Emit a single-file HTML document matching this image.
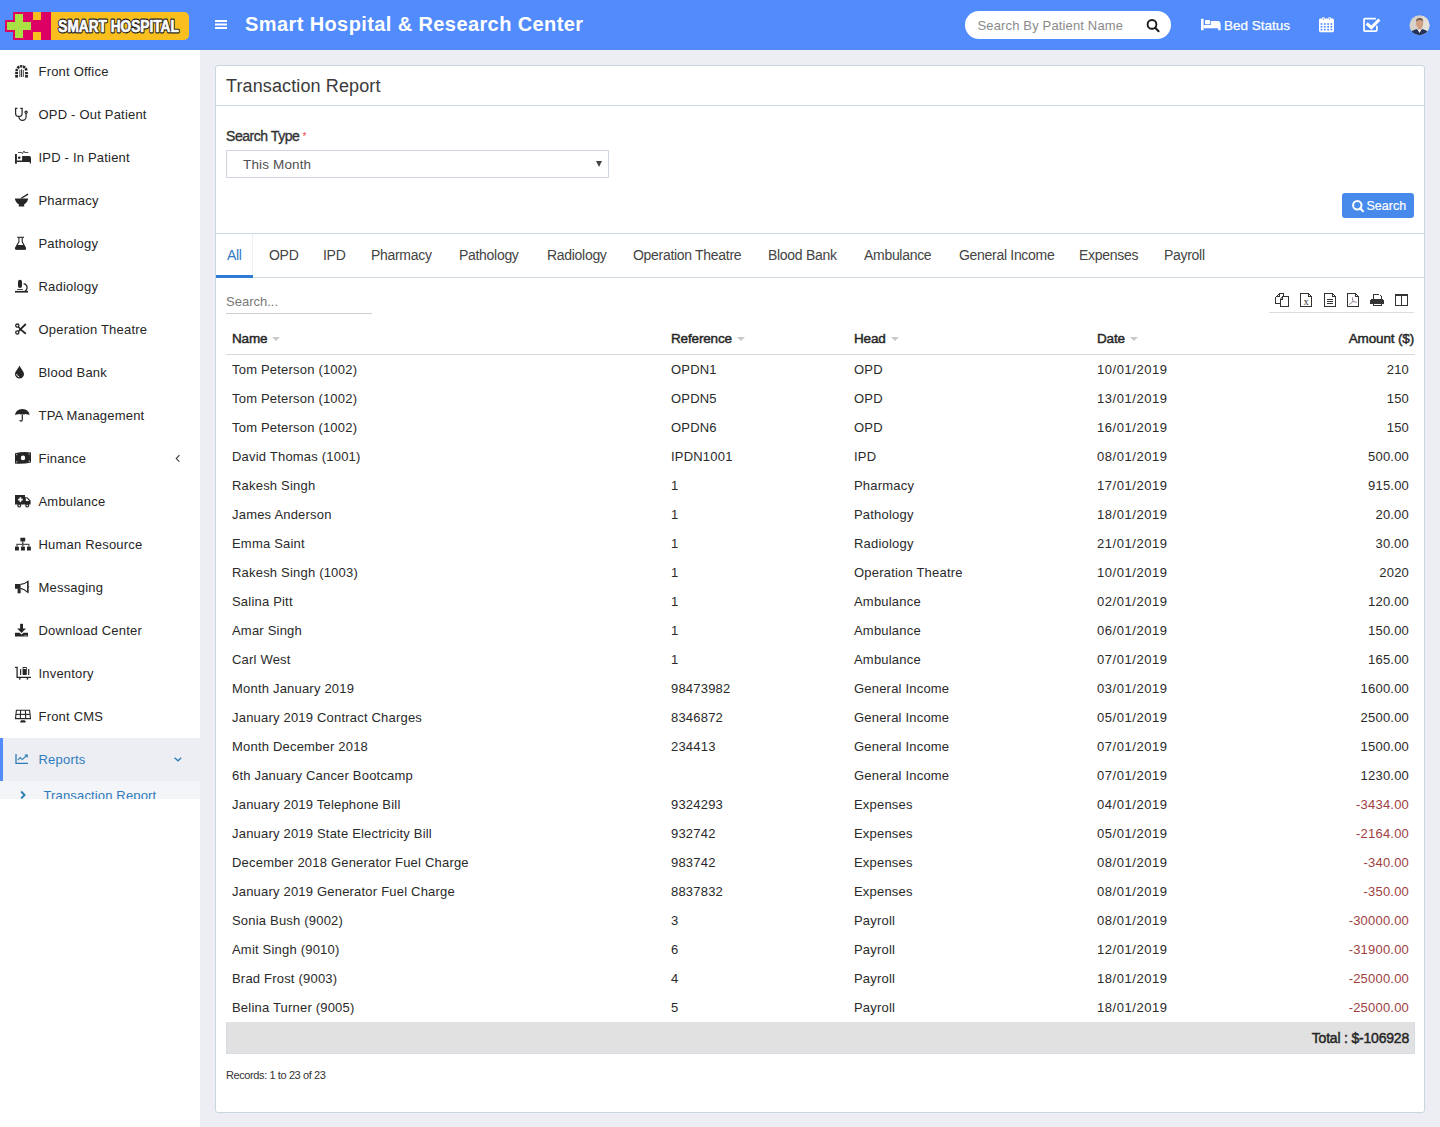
<!DOCTYPE html>
<html><head><meta charset="utf-8">
<style>
*{box-sizing:border-box;margin:0;padding:0}
html,body{width:1440px;height:1127px;overflow:hidden}
body{background:#eceef3;font-family:"Liberation Sans",sans-serif;color:#222;position:relative}
.a{position:absolute;white-space:nowrap}
.hdr{position:absolute;left:0;top:0;width:1440px;height:50px;background:#528cfc}
.side{position:absolute;left:0;top:50px;width:200px;height:1077px;background:#fff}
.mt{font-size:13px;color:#2b2b2b;line-height:16px;letter-spacing:0.2px}
.box{position:absolute;left:215px;top:65px;width:1210px;height:1048px;background:#fff;border:1px solid #c9d6df;border-radius:3px}
.tab{font-size:14px;color:#444;line-height:16px;top:247px;letter-spacing:-0.3px}
.th{font-size:13.5px;color:#262626;line-height:16px;top:331px;letter-spacing:-0.15px;-webkit-text-stroke:0.45px #262626}
.td{font-size:13px;color:#2a2a2a;line-height:16px;letter-spacing:0.2px}
.dg{letter-spacing:0.55px}
.neg{color:#a0413f}
.sort{display:inline-block;width:0;height:0;border-left:4px solid transparent;border-right:4px solid transparent;border-top:4px solid #c9c9c9;margin-left:5px;vertical-align:2px}
</style></head><body>

<div class="hdr">
<svg class="a" style="left:0;top:0" width="200" height="50" viewBox="0 0 200 50"><rect x="45" y="12" width="144" height="28" rx="5" fill="#f8bf1f"/><path d="M13 12 H51 V40 H13 V32 H5 V20 H13 Z" fill="#dc0065"/><rect x="15" y="14" width="8" height="24" fill="#a9e043"/><rect x="7" y="22" width="24" height="8" fill="#a9e043"/><rect x="33" y="12" width="8" height="8" fill="#f8bf1f"/><rect x="33" y="32" width="8" height="8" fill="#f8bf1f"/><text x="58.3" y="31.6" font-family="Liberation Sans" font-weight="bold" font-size="16" textLength="120.5" lengthAdjust="spacingAndGlyphs" fill="#1a1a1a" stroke="#1a1a1a" stroke-width="2.8" stroke-linejoin="round">SMART HOSPITAL</text><text x="58.3" y="31.6" font-family="Liberation Sans" font-weight="bold" font-size="16" textLength="120.5" lengthAdjust="spacingAndGlyphs" fill="#fff" stroke="#fff" stroke-width="0.7" stroke-linejoin="round">SMART HOSPITAL</text></svg>
<div class="a" style="left:245px;top:12px;font-size:20px;font-weight:bold;color:#fff;line-height:24px;letter-spacing:0.4px">Smart Hospital &amp; Research Center</div>
<div class="a" style="left:965px;top:11px;width:206px;height:28px;background:#fff;border-radius:14px"></div>
<div class="a" style="left:977.5px;top:18px;font-size:13px;color:#8a8a8a;line-height:16px;letter-spacing:0.15px">Search By Patient Name</div>
<div class="a" style="left:1224px;top:17.5px;font-size:13.5px;color:#fff;line-height:16px;-webkit-text-stroke:0.25px #fff">Bed Status</div>
<svg class="a" style="left:215px;top:19px" width="12" height="11" viewBox="0 0 12 11" fill="#fff"><rect x="0" y="1" width="12" height="2"/><rect x="0" y="4.5" width="12" height="2"/><rect x="0" y="8" width="12" height="2"/></svg><svg class="a" style="left:1144px;top:17px" width="18" height="18" viewBox="0 0 18 18"><circle cx="8" cy="7.4" r="4.4" fill="none" stroke="#1b1b1b" stroke-width="1.9"/><path d="M11.2 10.8 L14.6 14.3" stroke="#1b1b1b" stroke-width="2" stroke-linecap="round"/></svg><svg class="a" style="left:1200px;top:18px" width="22" height="13" viewBox="0 0 22 13" fill="#fff"><rect x="1" y="0.8" width="2.6" height="11.4"/><rect x="5" y="2" width="5" height="4.2" rx="1"/><path d="M3.5 9.5 V7 H10.8 V3 H17.5 Q20.6 3 20.6 6.3 V12.2 H18.2 V10.3 H3.5 Z"/></svg><svg class="a" style="left:1318px;top:16px" width="18" height="18" viewBox="0 0 18 18"><rect x="1" y="2.6" width="15" height="13.6" rx="1.4" fill="#fff"/><rect x="4.2" y="1" width="2.4" height="3.4" rx="1" fill="#fff"/><rect x="10.4" y="1" width="2.4" height="3.4" rx="1" fill="#fff"/><rect x="5" y="1.6" width="0.8" height="2.4" fill="#7aa6fa"/><rect x="11.2" y="1.6" width="0.8" height="2.4" fill="#7aa6fa"/><g fill="#528cfc"><rect x="2.6" y="7.2" width="1.8" height="1.6"/><rect x="5.9" y="7.2" width="1.8" height="1.6"/><rect x="9.2" y="7.2" width="1.8" height="1.6"/><rect x="12.5" y="7.2" width="1.8" height="1.6"/><rect x="2.6" y="10" width="1.8" height="1.6"/><rect x="5.9" y="10" width="1.8" height="1.6"/><rect x="9.2" y="10" width="1.8" height="1.6"/><rect x="12.5" y="10" width="1.8" height="1.6"/><rect x="2.6" y="12.8" width="1.8" height="1.6"/><rect x="5.9" y="12.8" width="1.8" height="1.6"/><rect x="9.2" y="12.8" width="1.8" height="1.6"/><rect x="12.5" y="12.8" width="1.8" height="1.6"/></g></svg><svg class="a" style="left:1362px;top:16px" width="20" height="18" viewBox="0 0 20 18" fill="none" stroke="#fff"><path d="M14.9 9.8 V13.9 Q14.9 15.1 13.7 15.1 H3.2 Q2 15.1 2 13.9 V3.8 Q2 2.6 3.2 2.6 H13.9" stroke-width="1.7"/><path d="M4.7 7.5 L9.4 11.7 L17.4 3.5" stroke-width="3.1"/></svg><svg class="a" style="left:1409px;top:15px" width="21" height="21" viewBox="0 0 21 21"><defs><clipPath id="av"><circle cx="10.5" cy="10.3" r="10"/></clipPath></defs><g clip-path="url(#av)"><rect width="21" height="21" fill="#d7d2cb"/><rect x="14" y="0" width="7" height="21" fill="#e4e0da"/><path d="M0 21 L2 16.5 Q5 14.6 8 14 L10.5 17 L13 14 Q16 14.6 19 16.5 L21 21 Z" fill="#24335a"/><path d="M8.3 14 L10.5 18 L12.7 14 Z" fill="#f4f4f4"/><ellipse cx="10.6" cy="8.6" rx="3.6" ry="4.6" fill="#d1a184"/><path d="M6.9 7.2 Q7 3.2 10.6 3.1 Q14.3 3.2 14.3 7 Q13.8 5.2 10.6 5.1 Q7.6 5.2 6.9 7.2 Z" fill="#6e5b4d"/><rect x="9" y="12.2" width="3.2" height="2.2" fill="#c9967a"/></g></svg>
</div>
<div class="side">
<div class="a mt" style="left:38.5px;top:14px;color:#262626">Front Office</div>
<svg class="a" style="left:12px;top:12px" width="22" height="18" viewBox="0 0 22 18" fill="#262626" stroke="none"><path d="M4.6 9.2 A4.9 4.9 0 0 1 14.4 9.2" stroke="#262626" stroke-width="2.6" fill="none" stroke-dasharray="2.3 0.7"/><rect x="3.2" y="10" width="2.8" height="2.2"/><rect x="3.2" y="13" width="2.8" height="2.6"/><rect x="13.1" y="10" width="2.8" height="2.2"/><rect x="13.1" y="13" width="2.8" height="2.6"/><rect x="7.4" y="7.8" width="0.9" height="7.2"/><rect x="9.1" y="7.2" width="0.9" height="7.8"/><rect x="10.8" y="7.8" width="0.9" height="7.2"/></svg>
<div class="a mt" style="left:38.5px;top:57px;color:#262626">OPD - Out Patient</div>
<svg class="a" style="left:12px;top:55px" width="22" height="18" viewBox="0 0 22 18" fill="#262626" stroke="none"><g fill="none" stroke="#262626" stroke-width="1.2"><path d="M3.6 3.2 V8.2 A3.25 3.25 0 0 0 10.1 8.2 V3.2"/><path d="M3 3.3 H5.4 M8.3 3.3 H10.7"/><path d="M6.9 11.4 V11.8 A3.6 3.6 0 0 0 14.1 11.8 V8.3"/><circle cx="14.1" cy="7.2" r="1.1"/></g></svg>
<div class="a mt" style="left:38.5px;top:100px;color:#262626">IPD - In Patient</div>
<svg class="a" style="left:12px;top:98px" width="22" height="18" viewBox="0 0 22 18" fill="#262626" stroke="none"><path d="M6 4.5 H9.8 L10.4 5.8 L12 3 L12.6 4.5 H16.3" fill="none" stroke="#262626" stroke-width="0.8"/><rect x="3" y="6" width="1.9" height="9.7"/><circle cx="7.2" cy="9.8" r="1.3"/><path d="M10.1 8 H17 Q19 8 19 10 V15.6 H17.8 V14 H4.9 V12.5 H10.1 Z"/></svg>
<div class="a mt" style="left:38.5px;top:143px;color:#262626">Pharmacy</div>
<svg class="a" style="left:12px;top:141px" width="22" height="18" viewBox="0 0 22 18" fill="#262626" stroke="none"><path d="M9.6 7 L15.6 3.3" stroke="#262626" stroke-width="1.4" fill="none" stroke-linecap="round"/><path d="M3 7.6 H16 V8.4 L15 10.8 Q14 12.6 12.2 13.3 V15.6 H6.8 V13.3 Q5 12.6 4 10.8 L3 8.4 Z"/></svg>
<div class="a mt" style="left:38.5px;top:186px;color:#262626">Pathology</div>
<svg class="a" style="left:12px;top:184px" width="22" height="18" viewBox="0 0 22 18" fill="#262626" stroke="none"><g fill="none" stroke="#262626" stroke-width="1.1"><path d="M5.2 3.3 H12"/><path d="M6.9 3.4 V7.8 L3.5 14 Q3.2 15.1 4.4 15.1 H12.7 Q13.8 15.1 13.5 14 L10.2 7.8 V3.4"/></g><path d="M5 11 H12 L13.7 14.2 Q14 15.6 12.6 15.6 H4.4 Q3 15.6 3.4 14.2 Z"/></svg>
<div class="a mt" style="left:38.5px;top:229px;color:#262626">Radiology</div>
<svg class="a" style="left:12px;top:227px" width="22" height="18" viewBox="0 0 22 18" fill="#262626" stroke="none"><rect x="6" y="2.7" width="4" height="8.2" rx="2"/><rect x="5.2" y="12" width="5.8" height="0.8"/><path d="M11.6 6.6 Q15.6 7.6 15 11.5 Q14.6 13.2 13 14" fill="none" stroke="#262626" stroke-width="1.3"/><rect x="3" y="13.9" width="13" height="1.7"/></svg>
<div class="a mt" style="left:38.5px;top:272px;color:#262626">Operation Theatre</div>
<svg class="a" style="left:12px;top:270px" width="22" height="18" viewBox="0 0 22 18" fill="#262626" stroke="none"><g fill="none" stroke="#262626" stroke-width="1.3"><circle cx="5.3" cy="5.6" r="1.6"/><circle cx="5.3" cy="12.4" r="1.6"/></g><path d="M6.5 7 L8.6 9.2 L6.5 11.2" fill="none" stroke="#262626" stroke-width="1.5"/><path d="M7.6 10.2 L13.8 4 M7.6 8.6 L13.8 13.8" stroke="#262626" stroke-width="1.8" fill="none"/></svg>
<div class="a mt" style="left:38.5px;top:315px;color:#262626">Blood Bank</div>
<svg class="a" style="left:12px;top:313px" width="22" height="18" viewBox="0 0 22 18" fill="#262626" stroke="none"><path d="M7.5 2.6 C8.6 5.6 12 8.5 12 11 A4.5 4.5 0 0 1 3 11 C3 8.5 6.4 5.6 7.5 2.6 Z"/><path d="M4.6 11 Q4.7 13.4 7.2 13.8" fill="none" stroke="#fff" stroke-width="0.9"/></svg>
<div class="a mt" style="left:38.5px;top:358px;color:#262626">TPA Management</div>
<svg class="a" style="left:12px;top:356px" width="22" height="18" viewBox="0 0 22 18" fill="#262626" stroke="none"><path d="M3 9.2 Q3.6 3.2 10.3 3 Q17 3.2 17.6 9.2 Q16.4 8 15.2 8.6 Q13.6 7.6 12 8.6 Q10.3 7.8 8.6 8.6 Q7 7.6 5.4 8.6 Q4.2 8 3 9.2 Z"/><path d="M10.3 8.5 V13.8 Q10.3 15.2 9.1 15.2 Q7.9 15.2 7.9 14" fill="none" stroke="#262626" stroke-width="1.2"/></svg>
<div class="a mt" style="left:38.5px;top:401px;color:#262626">Finance</div>
<svg class="a" style="left:12px;top:399px" width="22" height="18" viewBox="0 0 22 18" fill="#262626" stroke="none"><path d="M3 4.2 Q11 2.2 19 3.4 V13.4 Q11 15.4 3 14.6 Z"/><ellipse cx="11" cy="8.9" rx="2.2" ry="2.4" fill="#fff"/><circle cx="4.8" cy="5.6" r="0.6" fill="#fff"/><circle cx="17.2" cy="5" r="0.6" fill="#fff"/><circle cx="4.8" cy="12.8" r="0.6" fill="#fff"/><circle cx="17.2" cy="12.2" r="0.6" fill="#fff"/></svg>
<div class="a mt" style="left:38.5px;top:444px;color:#262626">Ambulance</div>
<svg class="a" style="left:12px;top:442px" width="22" height="18" viewBox="0 0 22 18" fill="#262626" stroke="none"><path d="M3 3 H13 V5.3 H15.2 L18.6 8.6 V12.6 H3 Z"/><path d="M13.8 6.2 H14.8 L17.2 9 H13.8 Z" fill="#fff"/><path d="M7.6 5.3 H9.2 V6.8 H10.7 V8.4 H9.2 V9.9 H7.6 V8.4 H6.1 V6.8 H7.6 Z" fill="#fff"/><circle cx="7.2" cy="13.6" r="2"/><circle cx="15.2" cy="13.6" r="2"/><circle cx="7.2" cy="13.6" r="0.8" fill="#fff"/><circle cx="15.2" cy="13.6" r="0.8" fill="#fff"/></svg>
<div class="a mt" style="left:38.5px;top:487px;color:#262626">Human Resource</div>
<svg class="a" style="left:12px;top:485px" width="22" height="18" viewBox="0 0 22 18" fill="#262626" stroke="none"><rect x="8.4" y="2.7" width="4.8" height="3.9" rx="0.5"/><rect x="10.2" y="6.5" width="1.2" height="4.6"/><path d="M4.9 11.2 V9.4 H16.9 V11.2" fill="none" stroke="#555" stroke-width="1.2"/><rect x="3" y="11.6" width="3.9" height="4" rx="0.5"/><rect x="9" y="11.6" width="3.9" height="4" rx="0.5"/><rect x="15" y="11.6" width="3.9" height="4" rx="0.5"/></svg>
<div class="a mt" style="left:38.5px;top:530px;color:#262626">Messaging</div>
<svg class="a" style="left:12px;top:528px" width="22" height="18" viewBox="0 0 22 18" fill="#262626" stroke="none"><rect x="3" y="6" width="5.6" height="4.8"/><rect x="5.6" y="10.5" width="3" height="4.8"/><path d="M8.6 6.4 Q12.4 6.2 15.8 3.3 V14.3 Q12.4 11.2 8.6 10.4" fill="none" stroke="#262626" stroke-width="1.1"/><rect x="15.2" y="3.1" width="1.3" height="11.4"/><path d="M16.4 7.8 L17.4 8.7 L16.4 9.6 Z"/></svg>
<div class="a mt" style="left:38.5px;top:573px;color:#262626">Download Center</div>
<svg class="a" style="left:12px;top:571px" width="22" height="18" viewBox="0 0 22 18" fill="#262626" stroke="none"><rect x="8.1" y="2.8" width="2.9" height="5.2"/><path d="M5.1 7.6 H14 L9.55 12 Z"/><path d="M3 11.8 H7.6 L9.55 13.4 L11.5 11.8 H16 V15.6 H3 Z"/><circle cx="12.2" cy="14.4" r="0.45" fill="#fff"/><circle cx="13.4" cy="14.4" r="0.45" fill="#fff"/><circle cx="14.5" cy="14.4" r="0.45" fill="#fff"/></svg>
<div class="a mt" style="left:38.5px;top:616px;color:#262626">Inventory</div>
<svg class="a" style="left:12px;top:614px" width="22" height="18" viewBox="0 0 22 18" fill="#262626" stroke="none"><path d="M3 3.3 H5.1 V13.4 H19" fill="none" stroke="#262626" stroke-width="1.3"/><circle cx="7.8" cy="14.8" r="0.9"/><circle cx="15.4" cy="14.8" r="0.9"/><rect x="10.6" y="3" width="4.2" height="7.9" rx="0.6"/><rect x="11.4" y="4" width="2.6" height="1" fill="#fff"/><rect x="8" y="5" width="1.2" height="6" rx="0.5"/><rect x="16.1" y="5" width="1.2" height="6" rx="0.5"/></svg>
<div class="a mt" style="left:38.5px;top:659px;color:#262626">Front CMS</div>
<svg class="a" style="left:12px;top:657px" width="22" height="18" viewBox="0 0 22 18" fill="#262626" stroke="none"><g fill="none" stroke="#262626" stroke-width="1.1"><path d="M4.4 3.3 H17.6 L18.5 11.6 H3.5 Z"/><path d="M3.9 7.4 H18"/><path d="M8.6 3.3 L8.3 11.6 M13.4 3.3 L13.7 11.6"/></g><path d="M8.2 15.4 H13.6 V14.4 L12.6 13.2 H9.2 L8.2 14.4 Z"/></svg>
<div class="a" style="left:0;top:688px;width:200px;height:43px;background:#eceef3;border-left:3px solid #528cfc"></div>
<div class="a" style="left:0;top:731px;width:200px;height:18px;background:#f4f5f8;overflow:hidden"><div class="a" style="left:43.5px;top:7px;font-size:13px;color:#2f7bbd;line-height:16px;letter-spacing:0.15px">Transaction Report</div><svg class="a" style="left:18px;top:8px" width="10" height="10" viewBox="0 0 10 10"><path d="M3.2 2.5 L6.6 6 L3.2 9.5" fill="none" stroke="#2c7cb6" stroke-width="1.8"/></svg></div>
<div class="a mt" style="left:38.5px;top:702px;color:#2f7bbd">Reports</div>
<svg class="a" style="left:12px;top:700px" width="22" height="18" viewBox="0 0 22 18" fill="#2c7cb6" stroke="none"><path d="M4 4 V13.4 H16" fill="none" stroke="#2c7cb6" stroke-width="1.3"/><path d="M5.8 10.2 L8.2 7.6 L10.3 9.6 L14 6" fill="none" stroke="#2c7cb6" stroke-width="1.1"/><path d="M12.3 4.6 H15.8 V8.1 Z"/></svg>
<svg class="a" style="left:170px;top:403px" width="16" height="14" viewBox="0 0 16 14"><path d="M9.4 2.2 L6.3 5.6 L9.4 8.7" fill="none" stroke="#444" stroke-width="1.2"/></svg>
<svg class="a" style="left:170px;top:703px" width="16" height="14" viewBox="0 0 16 14"><path d="M4.6 4.7 L8 7.8 L11.2 4.7" fill="none" stroke="#2c7cb6" stroke-width="1.3"/></svg>
</div>
<div class="box">
<div class="a" style="left:10px;top:9px;font-size:18px;color:#3a3a3a;line-height:22px;letter-spacing:0.12px">Transaction Report</div>
<div class="a" style="left:0;top:39px;width:1208px;height:1px;background:#d0dae2"></div>
</div>
<div class="a" style="left:226px;top:127.5px;font-size:14px;color:#333;line-height:16px;letter-spacing:-0.45px;-webkit-text-stroke:0.35px #333">Search Type</div><div class="a" style="left:302.5px;top:131px;font-size:10px;line-height:12px;color:#e8484a">*</div>
<div class="a" style="left:226px;top:150px;width:383px;height:28px;border:1px solid #cfd5df;background:#fff"></div>
<div class="a" style="left:243px;top:157px;font-size:13.5px;color:#505050;line-height:16px;letter-spacing:0.15px">This Month</div>
<div class="a" style="left:596px;top:161px;width:0;height:0;border-left:3.5px solid transparent;border-right:3.5px solid transparent;border-top:6px solid #444"></div>
<div class="a" style="left:1342px;top:193px;width:72px;height:25px;background:#478aec;border-radius:3px"></div>
<div class="a" style="left:1366.5px;top:198px;font-size:12.5px;color:#fff;line-height:16px;-webkit-text-stroke:0.2px #fff">Search</div>
<svg class="a" style="left:1350px;top:198px" width="16" height="16" viewBox="0 0 16 16"><circle cx="7.3" cy="7.2" r="4.2" fill="none" stroke="#fff" stroke-width="2"/><path d="M10.2 10.2 L13 13.2" stroke="#fff" stroke-width="2.2" stroke-linecap="round"/></svg>
<div class="a" style="left:216px;top:233px;width:1208px;height:1px;background:#d0dae2"></div>
<div class="a" style="left:216px;top:277px;width:1208px;height:1px;background:#d0dae2"></div>
<div class="a" style="left:252px;top:234px;width:1px;height:41px;background:#eef0f3"></div>
<div class="a" style="left:216px;top:275px;width:37px;height:3px;background:#2f7ad6"></div>
<div class="a tab" style="left:227px;color:#3379c4">All</div>
<div class="a tab" style="left:269px;color:#444">OPD</div>
<div class="a tab" style="left:323px;color:#444">IPD</div>
<div class="a tab" style="left:371px;color:#444">Pharmacy</div>
<div class="a tab" style="left:459px;color:#444">Pathology</div>
<div class="a tab" style="left:547px;color:#444">Radiology</div>
<div class="a tab" style="left:633px;color:#444">Operation Theatre</div>
<div class="a tab" style="left:768px;color:#444">Blood Bank</div>
<div class="a tab" style="left:864px;color:#444">Ambulance</div>
<div class="a tab" style="left:959px;color:#444">General Income</div>
<div class="a tab" style="left:1079px;color:#444">Expenses</div>
<div class="a tab" style="left:1164px;color:#444">Payroll</div>
<div class="a" style="left:226px;top:293.5px;font-size:13px;color:#777;line-height:16px">Search...</div>
<div class="a" style="left:226px;top:313px;width:146px;height:1px;background:#d0d0d0"></div>
<svg class="a" style="left:1270px;top:288px" width="150" height="24" viewBox="0 0 150 24" fill="#333333"><rect x="9" y="5" width="5" height="1"/><rect x="13" y="5" width="1" height="4"/><rect x="5" y="9" width="1" height="7"/><rect x="5" y="15" width="5" height="1"/><rect x="6" y="8" width="3" height="1"/><rect x="9" y="6" width="1" height="3"/><path d="M9.5 5.5 L5.5 9.5" stroke="#333333" stroke-width="1" fill="none"/><rect x="12" y="8" width="7" height="1"/><rect x="18" y="8" width="1" height="11"/><rect x="10" y="18" width="9" height="1"/><rect x="10" y="11" width="1" height="8"/><rect x="11" y="11" width="2" height="1"/><rect x="12" y="9" width="1" height="2"/><path d="M12.5 8.5 L10.5 11" stroke="#333333" stroke-width="1" fill="none"/><rect x="30" y="5" width="1" height="14"/><rect x="30" y="18" width="12" height="1"/><rect x="41" y="8" width="1" height="11"/><rect x="30" y="5" width="8" height="1"/><path d="M38.5 5.5 L41.5 8.5" stroke="#333333" stroke-width="1" fill="none"/><rect x="38" y="5" width="1" height="4"/><rect x="38" y="8" width="4" height="1"/><text x="33.4" y="16.7" font-family="Liberation Serif" font-size="10.5" fill="#333333">x</text><rect x="54" y="5" width="1" height="14"/><rect x="54" y="18" width="12" height="1"/><rect x="65" y="8" width="1" height="11"/><rect x="54" y="5" width="8" height="1"/><path d="M62.5 5.5 L65.5 8.5" stroke="#333333" stroke-width="1" fill="none"/><rect x="62" y="5" width="1" height="4"/><rect x="62" y="8" width="4" height="1"/><rect x="57" y="11" width="6" height="1"/><rect x="57" y="13" width="6" height="1"/><rect x="57" y="15" width="6" height="1"/><rect x="77" y="5" width="1" height="14"/><rect x="77" y="18" width="12" height="1"/><rect x="88" y="8" width="1" height="11"/><rect x="77" y="5" width="8" height="1"/><path d="M85.5 5.5 L88.5 8.5" stroke="#333333" stroke-width="1" fill="none"/><rect x="85" y="5" width="1" height="4"/><rect x="85" y="8" width="4" height="1"/><path d="M82.9 13.5 L82.4 9.4 M82.9 13.5 L79.3 16.6 M82.9 13.5 L86.6 14.3" stroke="#8e6f95" stroke-width="0.9" fill="none"/><rect x="103" y="6" width="6" height="1"/><rect x="103" y="6" width="1" height="6"/><rect x="111" y="8" width="1" height="4"/><rect x="110" y="7" width="1" height="1"/><rect x="100" y="12" width="14" height="4"/><rect x="101" y="11" width="12" height="1"/><rect x="103" y="16" width="1" height="2"/><rect x="111" y="16" width="1" height="2"/><rect x="103" y="17" width="9" height="1"/><rect x="125" y="6" width="13" height="2"/><rect x="125" y="6" width="1" height="12"/><rect x="137" y="6" width="1" height="12"/><rect x="131" y="6" width="1" height="12"/><rect x="125" y="17" width="13" height="1"/></svg>
<div class="a" style="left:1269px;top:312px;width:145px;height:1px;background:#dddddd"></div>
<div class="a th" style="left:232px">Name<span class="sort"></span></div>
<div class="a th" style="left:671px">Reference<span class="sort"></span></div>
<div class="a th" style="left:854px">Head<span class="sort"></span></div>
<div class="a th" style="left:1097px">Date<span class="sort"></span></div>
<div class="a th" style="right:26px">Amount ($)</div>
<div class="a" style="left:226px;top:354px;width:1189px;height:1px;background:#d9d9d9"></div>
<div class="a td" style="left:232px;top:362px">Tom Peterson (1002)</div>
<div class="a td" style="left:671px;top:362px">OPDN1</div>
<div class="a td" style="left:854px;top:362px">OPD</div>
<div class="a td dg" style="left:1097px;top:362px">10/01/2019</div>
<div class="a td" style="right:31px;top:362px">210</div>
<div class="a td" style="left:232px;top:391px">Tom Peterson (1002)</div>
<div class="a td" style="left:671px;top:391px">OPDN5</div>
<div class="a td" style="left:854px;top:391px">OPD</div>
<div class="a td dg" style="left:1097px;top:391px">13/01/2019</div>
<div class="a td" style="right:31px;top:391px">150</div>
<div class="a td" style="left:232px;top:420px">Tom Peterson (1002)</div>
<div class="a td" style="left:671px;top:420px">OPDN6</div>
<div class="a td" style="left:854px;top:420px">OPD</div>
<div class="a td dg" style="left:1097px;top:420px">16/01/2019</div>
<div class="a td" style="right:31px;top:420px">150</div>
<div class="a td" style="left:232px;top:449px">David Thomas (1001)</div>
<div class="a td" style="left:671px;top:449px">IPDN1001</div>
<div class="a td" style="left:854px;top:449px">IPD</div>
<div class="a td dg" style="left:1097px;top:449px">08/01/2019</div>
<div class="a td" style="right:31px;top:449px">500.00</div>
<div class="a td" style="left:232px;top:478px">Rakesh Singh</div>
<div class="a td" style="left:671px;top:478px">1</div>
<div class="a td" style="left:854px;top:478px">Pharmacy</div>
<div class="a td dg" style="left:1097px;top:478px">17/01/2019</div>
<div class="a td" style="right:31px;top:478px">915.00</div>
<div class="a td" style="left:232px;top:507px">James Anderson</div>
<div class="a td" style="left:671px;top:507px">1</div>
<div class="a td" style="left:854px;top:507px">Pathology</div>
<div class="a td dg" style="left:1097px;top:507px">18/01/2019</div>
<div class="a td" style="right:31px;top:507px">20.00</div>
<div class="a td" style="left:232px;top:536px">Emma Saint</div>
<div class="a td" style="left:671px;top:536px">1</div>
<div class="a td" style="left:854px;top:536px">Radiology</div>
<div class="a td dg" style="left:1097px;top:536px">21/01/2019</div>
<div class="a td" style="right:31px;top:536px">30.00</div>
<div class="a td" style="left:232px;top:565px">Rakesh Singh (1003)</div>
<div class="a td" style="left:671px;top:565px">1</div>
<div class="a td" style="left:854px;top:565px">Operation Theatre</div>
<div class="a td dg" style="left:1097px;top:565px">10/01/2019</div>
<div class="a td" style="right:31px;top:565px">2020</div>
<div class="a td" style="left:232px;top:594px">Salina Pitt</div>
<div class="a td" style="left:671px;top:594px">1</div>
<div class="a td" style="left:854px;top:594px">Ambulance</div>
<div class="a td dg" style="left:1097px;top:594px">02/01/2019</div>
<div class="a td" style="right:31px;top:594px">120.00</div>
<div class="a td" style="left:232px;top:623px">Amar Singh</div>
<div class="a td" style="left:671px;top:623px">1</div>
<div class="a td" style="left:854px;top:623px">Ambulance</div>
<div class="a td dg" style="left:1097px;top:623px">06/01/2019</div>
<div class="a td" style="right:31px;top:623px">150.00</div>
<div class="a td" style="left:232px;top:652px">Carl West</div>
<div class="a td" style="left:671px;top:652px">1</div>
<div class="a td" style="left:854px;top:652px">Ambulance</div>
<div class="a td dg" style="left:1097px;top:652px">07/01/2019</div>
<div class="a td" style="right:31px;top:652px">165.00</div>
<div class="a td" style="left:232px;top:681px">Month January 2019</div>
<div class="a td" style="left:671px;top:681px">98473982</div>
<div class="a td" style="left:854px;top:681px">General Income</div>
<div class="a td dg" style="left:1097px;top:681px">03/01/2019</div>
<div class="a td" style="right:31px;top:681px">1600.00</div>
<div class="a td" style="left:232px;top:710px">January 2019 Contract Charges</div>
<div class="a td" style="left:671px;top:710px">8346872</div>
<div class="a td" style="left:854px;top:710px">General Income</div>
<div class="a td dg" style="left:1097px;top:710px">05/01/2019</div>
<div class="a td" style="right:31px;top:710px">2500.00</div>
<div class="a td" style="left:232px;top:739px">Month December 2018</div>
<div class="a td" style="left:671px;top:739px">234413</div>
<div class="a td" style="left:854px;top:739px">General Income</div>
<div class="a td dg" style="left:1097px;top:739px">07/01/2019</div>
<div class="a td" style="right:31px;top:739px">1500.00</div>
<div class="a td" style="left:232px;top:768px">6th January Cancer Bootcamp</div>
<div class="a td" style="left:671px;top:768px"></div>
<div class="a td" style="left:854px;top:768px">General Income</div>
<div class="a td dg" style="left:1097px;top:768px">07/01/2019</div>
<div class="a td" style="right:31px;top:768px">1230.00</div>
<div class="a td" style="left:232px;top:797px">January 2019 Telephone Bill</div>
<div class="a td" style="left:671px;top:797px">9324293</div>
<div class="a td" style="left:854px;top:797px">Expenses</div>
<div class="a td dg" style="left:1097px;top:797px">04/01/2019</div>
<div class="a td neg" style="right:31px;top:797px">-3434.00</div>
<div class="a td" style="left:232px;top:826px">January 2019 State Electricity Bill</div>
<div class="a td" style="left:671px;top:826px">932742</div>
<div class="a td" style="left:854px;top:826px">Expenses</div>
<div class="a td dg" style="left:1097px;top:826px">05/01/2019</div>
<div class="a td neg" style="right:31px;top:826px">-2164.00</div>
<div class="a td" style="left:232px;top:855px">December 2018 Generator Fuel Charge</div>
<div class="a td" style="left:671px;top:855px">983742</div>
<div class="a td" style="left:854px;top:855px">Expenses</div>
<div class="a td dg" style="left:1097px;top:855px">08/01/2019</div>
<div class="a td neg" style="right:31px;top:855px">-340.00</div>
<div class="a td" style="left:232px;top:884px">January 2019 Generator Fuel Charge</div>
<div class="a td" style="left:671px;top:884px">8837832</div>
<div class="a td" style="left:854px;top:884px">Expenses</div>
<div class="a td dg" style="left:1097px;top:884px">08/01/2019</div>
<div class="a td neg" style="right:31px;top:884px">-350.00</div>
<div class="a td" style="left:232px;top:913px">Sonia Bush (9002)</div>
<div class="a td" style="left:671px;top:913px">3</div>
<div class="a td" style="left:854px;top:913px">Payroll</div>
<div class="a td dg" style="left:1097px;top:913px">08/01/2019</div>
<div class="a td neg" style="right:31px;top:913px">-30000.00</div>
<div class="a td" style="left:232px;top:942px">Amit Singh (9010)</div>
<div class="a td" style="left:671px;top:942px">6</div>
<div class="a td" style="left:854px;top:942px">Payroll</div>
<div class="a td dg" style="left:1097px;top:942px">12/01/2019</div>
<div class="a td neg" style="right:31px;top:942px">-31900.00</div>
<div class="a td" style="left:232px;top:971px">Brad Frost (9003)</div>
<div class="a td" style="left:671px;top:971px">4</div>
<div class="a td" style="left:854px;top:971px">Payroll</div>
<div class="a td dg" style="left:1097px;top:971px">18/01/2019</div>
<div class="a td neg" style="right:31px;top:971px">-25000.00</div>
<div class="a td" style="left:232px;top:1000px">Belina Turner (9005)</div>
<div class="a td" style="left:671px;top:1000px">5</div>
<div class="a td" style="left:854px;top:1000px">Payroll</div>
<div class="a td dg" style="left:1097px;top:1000px">18/01/2019</div>
<div class="a td neg" style="right:31px;top:1000px">-25000.00</div>
<div class="a" style="left:226px;top:1022px;width:1189px;height:32px;background:#e1e1e1;border:1px solid #d6dde5;border-top:none"></div>
<div class="a" style="right:31px;top:1030px;font-size:14px;color:#262626;line-height:16px;letter-spacing:-0.2px;-webkit-text-stroke:0.45px #262626">Total : $-106928</div>
<div class="a" style="left:226px;top:1069px;font-size:11px;color:#333;line-height:13px;letter-spacing:-0.4px">Records: 1 to 23 of 23</div>
</body></html>
